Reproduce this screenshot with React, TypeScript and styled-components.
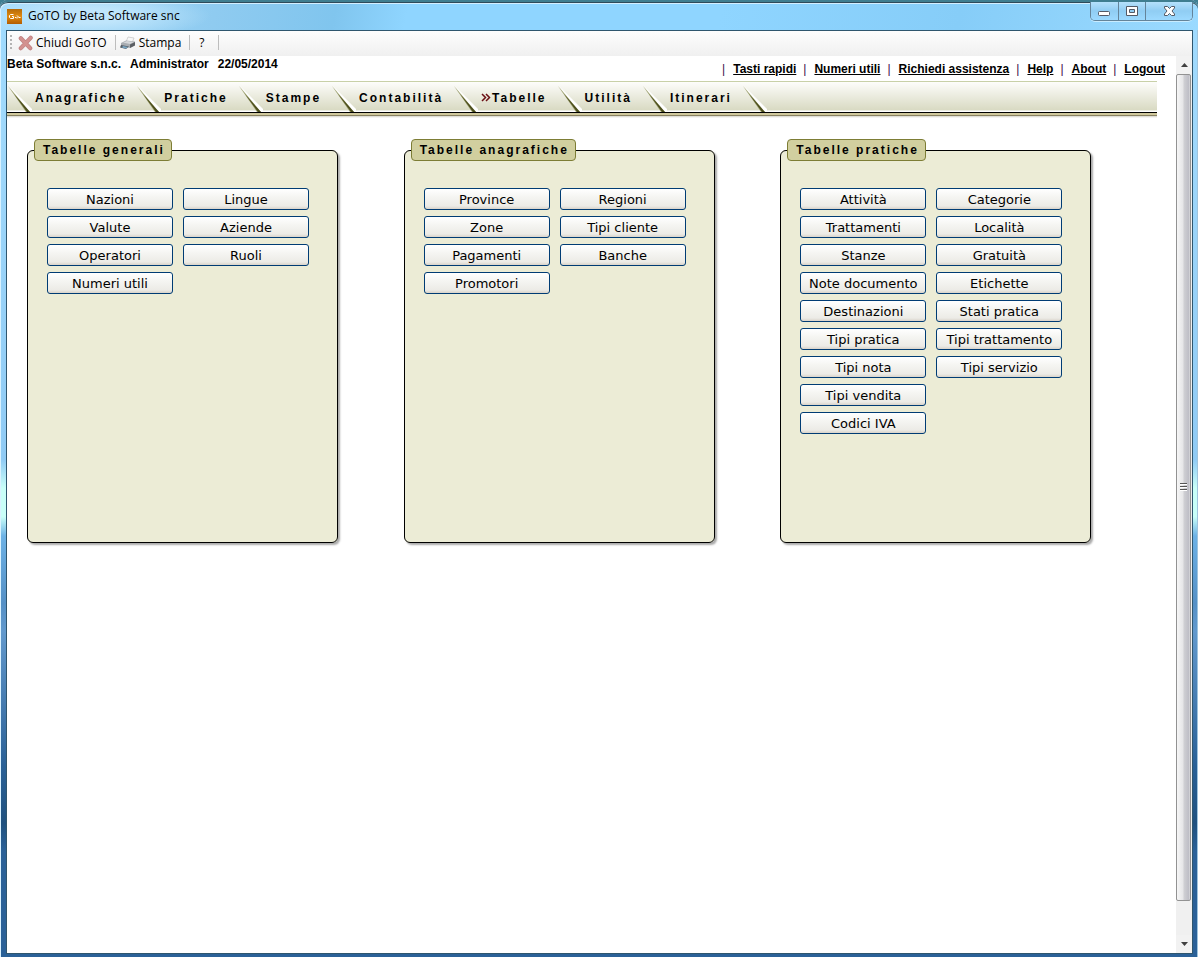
import React from "react";
import styled, { createGlobalStyle } from "styled-components";

const GlobalStyle = createGlobalStyle`
  * { box-sizing: border-box; }
  body {
    margin: 0;
    background: #3f7f92;
    color: #000;
    font-family: "Liberation Sans", Arial, sans-serif;
    font-size: 12px;
  }
`;

const Frame = styled.div`
  display: flex;
  flex-direction: column;
  min-height: 100vh;
  padding: 0 5px 3px 6px;
  border-radius: 8px 8px 0 0;
  background: linear-gradient(
    #a0dbff 0, #9fd8fb 14%, #90cbf5 48%, #c9fff8 51%, #c9fff8 54%,
    #6db2e6 56%, #5590c6 63%, #6299cd 66%, #4379ae 74%, #2a6197 80%,
    #20517f 86%, #2b6198 89%, #2b6198 100%
  );
  box-shadow: inset 0 2px 0 #3b5f73, inset 1px 3px 0 #d9f2ff, inset -1px 0 0 #9fc4dd;
`;

const TitleBar = styled.header`
  display: flex;
  align-items: center;
  height: 30px;
  margin: 0 -5px 0 -6px;
  padding: 0 5px 0 7px;
  border-radius: 8px 8px 0 0;
  border-top: 2px solid #3f7e90;
  box-shadow: inset 0 1px 0 #2f4a5a, inset 1px 2px 0 #d4efff;
  background:
    radial-gradient(ellipse 120px 24px at 90px 14px, #bfe5fb 30%, transparent 100%),
    linear-gradient(100deg, #a5dcfc 0, #8fcbf0 18%, #80c5ee 28%, #8fd5ff 34%, #8fd5ff 60%, #86cdf8 80%, #9bdaff 100%);
`;

const Title = styled.h1`
  flex: 1;
  margin: 0;
  padding-left: 6px;
  font: 12px/16px "Open Sans", "Noto Sans", sans-serif;
`;

const WindowButtons = styled.div`
  display: flex;
  align-self: flex-start;
  height: 19px;
  border: 1px solid #64849a;
  border-top: 0;
  border-radius: 0 0 5px 5px;
  box-shadow: 0 1px 0 #c9ecff;
  overflow: hidden;
`;

const WindowButton = styled.button<{ $wide?: boolean }>`
  display: flex;
  align-items: center;
  justify-content: center;
  width: ${(p) => (p.$wide ? 47 : 27)}px;
  padding: 0;
  border: 0;
  background: linear-gradient(#b5e1fb, #90cdf3 50%, #9ddaff);
  & + & { border-left: 1px solid #64849a; }
`;

const Client = styled.div`
  flex: 1;
  display: flex;
  flex-direction: column;
  border: 1px solid #2f566e;
  background: #fff;
`;

const Toolbar = styled.div`
  display: flex;
  align-items: center;
  height: 25px;
  padding: 0 0 2px 3px;
  background: linear-gradient(#fdfdfd, #f0f0f0);
`;

const Grip = styled.span`
  width: 2px;
  height: 15px;
  margin-right: 6px;
  background: repeating-linear-gradient(#b4b4b4 0 2px, transparent 2px 4px);
`;

const ToolButton = styled.button`
  display: flex;
  align-items: center;
  gap: 3px;
  height: 22px;
  padding: 0 8px 0 0;
  border: 0;
  background: none;
  color: #000;
  font: 12px/16px "Open Sans", "Noto Sans", sans-serif;
`;

const ToolDivider = styled.span`
  width: 1px;
  height: 15px;
  margin-right: 4px;
  background: #bdbdbd;
`;

const HelpButton = styled(ToolButton)`
  padding: 0 13px 0 5px;
`;

const Body = styled.div`
  flex: 1;
  display: flex;
`;

const Page = styled.main`
  flex: 1;
  min-width: 0;
`;

const InfoBar = styled.div`
  display: flex;
  justify-content: space-between;
  height: 25px;
  padding-right: 11px;
  font-weight: bold;
`;

const Session = styled.div`
  display: flex;
  gap: 9px;
  line-height: 16px;
`;

const Links = styled.nav`
  display: flex;
  gap: 7px;
  padding-top: 5px;
  line-height: 16px;
`;

const Separator = styled.span`
  padding-right: 1px;
  color: #3d0a4a;
  font-weight: normal;
`;

const TopLink = styled.a`
  color: #000;
  text-decoration: underline;
`;

const Menu = styled.nav`
  display: flex;
  height: 37px;
  margin-right: 19px;
  padding-left: 1px;
  border-top: 1px solid #c8d0a8;
  background: linear-gradient(
    #fdfdfb 0, #d9dac3 28px, #fff 29px, #fff 30px, #000 30px, #000 31px,
    #d0c89c 31px, #d0c89c 33px, #8a8362 33px, #8a8362 34px, #d5d3c9 34px, #fff 36px
  );
`;

const MenuLink = styled.a`
  display: flex;
  height: 30px;
  padding-right: 11px;
  color: #000;
  font-weight: bold;
  line-height: 32px;
  letter-spacing: 2px;
  text-decoration: none;
`;

const Slash = styled.svg`
  width: 24px;
  height: 26px;
  margin: 4px 3px 0 0;
`;

const Chevrons = styled.svg`
  width: 11px;
  height: 9px;
  margin-top: 11px;
`;

const Panels = styled.div`
  display: grid;
  grid-template-columns: repeat(3, 1fr);
  margin-right: 19px;
  padding: 21px 0 20px 20px;
`;

const Panel = styled.fieldset`
  width: 311px;
  min-height: 404px;
  margin: 0;
  padding: 0 6px;
  border: 1px solid #000;
  border-radius: 6px;
  background: #ececd6;
  box-shadow: 2px 2px 2px #aaa;
`;

const PanelTitle = styled.legend`
  height: 22px;
  padding: 0 6px 0 8px;
  border: 1px solid #7d7d35;
  border-radius: 4px;
  background: #d1cf9f;
  font-weight: bold;
  line-height: 20px;
  letter-spacing: 2px;
`;

const Columns = styled.div`
  display: flex;
  gap: 10px;
  padding: 27px 13px 0;
`;

const Column = styled.div`
  display: flex;
  flex-direction: column;
  gap: 6px;
`;

const TableButton = styled.button`
  width: 126px;
  height: 22px;
  padding: 2px 0 0;
  border: 1px solid #003c74;
  border-radius: 3px;
  background: linear-gradient(#fff, #f5f5f2 40%, #ecebe6 85%, #d9d3ca);
  color: #000;
  font: 13px/18px "DejaVu Sans", Verdana, sans-serif;
  white-space: nowrap;
`;

const ScrollTrack = styled.div`
  display: flex;
  flex-direction: column;
  width: 16px;
  background: #f0f0f0;
`;

const ScrollArrow = styled.button`
  display: flex;
  align-items: center;
  justify-content: center;
  height: 18px;
  padding: 0;
  border: 0;
  background: #f2f2f2;
`;

const ScrollRail = styled.div`
  flex: 1;
`;

const ScrollThumb = styled.div`
  display: flex;
  align-items: center;
  justify-content: center;
  height: 96%;
  width: 15px;
  border: 1px solid #929292;
  border-radius: 2px;
  background: linear-gradient(90deg, #f6f6f6, #e6e6e8 45%, #cfcfd3 55%, #bebec6 90%, #dcdcde);
`;

const sessionInfo = ["Beta Software s.n.c.", "Administrator", "22/05/2014"];
const topLinks = ["Tasti rapidi", "Numeri utili", "Richiedi assistenza", "Help", "About", "Logout"];
const menuItems = ["Anagrafiche", "Pratiche", "Stampe", "Contabilità", "Tabelle", "Utilità", "Itinerari"];
const activeItem = "Tabelle";

const panels = [
  {
    title: "Tabelle generali",
    columns: [
      ["Nazioni", "Valute", "Operatori", "Numeri utili"],
      ["Lingue", "Aziende", "Ruoli"],
    ],
  },
  {
    title: "Tabelle anagrafiche",
    columns: [
      ["Province", "Zone", "Pagamenti", "Promotori"],
      ["Regioni", "Tipi cliente", "Banche"],
    ],
  },
  {
    title: "Tabelle pratiche",
    columns: [
      ["Attività", "Trattamenti", "Stanze", "Note documento", "Destinazioni", "Tipi pratica", "Tipi nota", "Tipi vendita", "Codici IVA"],
      ["Categorie", "Località", "Gratuità", "Etichette", "Stati pratica", "Tipi trattamento", "Tipi servizio"],
    ],
  },
];

function MenuSlash() {
  return (
    <Slash viewBox="0 0 24 26" aria-hidden="true">
      <path d="M1 0 L24 23 V26 H21Z" fill="#fff" />
      <path d="M0 0 L22 26 H18Z" fill="#9a9d6c" />
      <path d="M6 8 L22 26 H19Z" fill="#4b4d1c" />
    </Slash>
  );
}

function AppIcon() {
  return (
    <svg width="15" height="15" viewBox="0 0 15 15" aria-hidden="true">
      <defs>
        <linearGradient id="appOrange" x1="0" y1="0" x2="0" y2="1">
          <stop offset="0" stopColor="#b56a08" />
          <stop offset="0.5" stopColor="#e08a10" />
          <stop offset="1" stopColor="#b35c00" />
        </linearGradient>
      </defs>
      <rect width="15" height="15" fill="url(#appOrange)" />
      <path d="M6.500 5.500H3.500L2.500 6.500V8.500L3.500 9.500H6.500V7.500H5M8 8.500H9.500M10 6.500L11.500 8L10 9.500M12 8.500H13.500" fill="none" stroke="#fff" />
    </svg>
  );
}

function CloseIcon() {
  return (
    <svg width="15" height="16" viewBox="0 0 16 16" aria-hidden="true">
      <path d="M3 3L13 13.500M13.500 2.500L3 13.500" stroke="#bd7f7f" strokeWidth="4.500" strokeLinecap="round" />
      <path d="M3 3L13 13.500M13.500 2.500L3 13.500" stroke="#d3918f" strokeWidth="3" strokeLinecap="round" />
    </svg>
  );
}

function PrinterIcon() {
  return (
    <svg width="16" height="14" viewBox="0 0 16 14" aria-hidden="true">
      <path d="M6 6L8 1L14 2L12 7Z" fill="#f7f7f7" stroke="#c9c9c9" strokeWidth="0.800" />
      <path d="M1 7L6 4.500L15 5.500L15 9L10 12L1 10Z" fill="#a9adb2" />
      <path d="M3 6.500L7 5L14 6L10 8Z" fill="#d5d7da" />
      <path d="M10 8.500L15 6V9.500L10 12Z" fill="#5c6065" />
      <path d="M1 9L9 10.500L6 13L0 11.500Z" fill="#555d66" />
      <path d="M3 10L8 11L6 12.500L2 11.500Z" fill="#7aa7c4" />
    </svg>
  );
}

export default function App() {
  return (
    <>
      <GlobalStyle />
      <Frame>
        <TitleBar>
          <AppIcon />
          <Title>GoTO by Beta Software snc</Title>
          <WindowButtons>
            <WindowButton aria-label="Riduci a icona">
              <svg width="13" height="11" viewBox="0 0 13 11">
                <rect x="0.500" y="5.500" width="11" height="4" rx="1" fill="#fff" stroke="#545a66" />
              </svg>
            </WindowButton>
            <WindowButton aria-label="Ingrandisci">
              <svg width="13" height="11" viewBox="0 0 13 11">
                <path fillRule="evenodd" d="M0.500 0.500H11.500V9.500H0.500ZM3.500 3.500V6.500H8.500V3.500Z" fill="#fff" stroke="#545a66" />
              </svg>
            </WindowButton>
            <WindowButton $wide aria-label="Chiudi">
              <svg width="13" height="11" viewBox="0 0 13 11">
                <path d="M1.500 0.500H4.500L6.500 2.500L8.500 0.500H11.500V2L9 5L11.500 8V9.500H8.500L6.500 7.500L4.500 9.500H1.500V8L4 5L1.500 2Z" fill="#fff" stroke="#545a66" />
              </svg>
            </WindowButton>
          </WindowButtons>
        </TitleBar>
        <Client>
          <Toolbar>
            <Grip />
            <ToolButton>
              <CloseIcon />
              Chiudi GoTO
            </ToolButton>
            <ToolDivider />
            <ToolButton>
              <PrinterIcon />
              Stampa
            </ToolButton>
            <ToolDivider />
            <HelpButton>?</HelpButton>
            <ToolDivider />
          </Toolbar>
          <Body>
            <Page>
              <InfoBar>
                <Session>
                  {sessionInfo.map((text) => (
                    <span key={text}>{text}</span>
                  ))}
                </Session>
                <Links>
                  {topLinks.map((text) => (
                    <React.Fragment key={text}>
                      <Separator>|</Separator>
                      <TopLink href="#">{text}</TopLink>
                    </React.Fragment>
                  ))}
                </Links>
              </InfoBar>
              <Menu>
                {menuItems.map((text) => (
                  <MenuLink href="#" key={text}>
                    <MenuSlash />
                    {text === activeItem && (
                      <Chevrons viewBox="0 0 11 9" aria-hidden="true">
                        <path d="M1 1L4.500 4.500L1 8M5 1L8.500 4.500L5 8" fill="none" stroke="#6b0f14" strokeWidth="1.500" />
                      </Chevrons>
                    )}
                    {text}
                  </MenuLink>
                ))}
                <MenuSlash />
              </Menu>
              <Panels>
                {panels.map((panel) => (
                  <Panel key={panel.title}>
                    <PanelTitle>{panel.title}</PanelTitle>
                    <Columns>
                      {panel.columns.map((labels, index) => (
                        <Column key={index}>
                          {labels.map((label) => (
                            <TableButton key={label}>{label}</TableButton>
                          ))}
                        </Column>
                      ))}
                    </Columns>
                  </Panel>
                ))}
              </Panels>
            </Page>
            <ScrollTrack>
              <ScrollArrow aria-label="Scorri su">
                <svg width="7" height="4" viewBox="0 0 7 4"><path d="M0 4L3.500 0L7 4Z" fill="#404040" /></svg>
              </ScrollArrow>
              <ScrollRail>
                <ScrollThumb>
                  <svg width="7" height="8" viewBox="0 0 7 8">
                    <path d="M0 0.500H7M0 3.500H7M0 6.500H7" stroke="#555" />
                    <path d="M0 1.500H7M0 4.500H7M0 7.500H7" stroke="#fff" />
                  </svg>
                </ScrollThumb>
              </ScrollRail>
              <ScrollArrow aria-label="Scorri giù">
                <svg width="7" height="4" viewBox="0 0 7 4"><path d="M0 0L3.500 4L7 0Z" fill="#404040" /></svg>
              </ScrollArrow>
            </ScrollTrack>
          </Body>
        </Client>
      </Frame>
    </>
  );
}
